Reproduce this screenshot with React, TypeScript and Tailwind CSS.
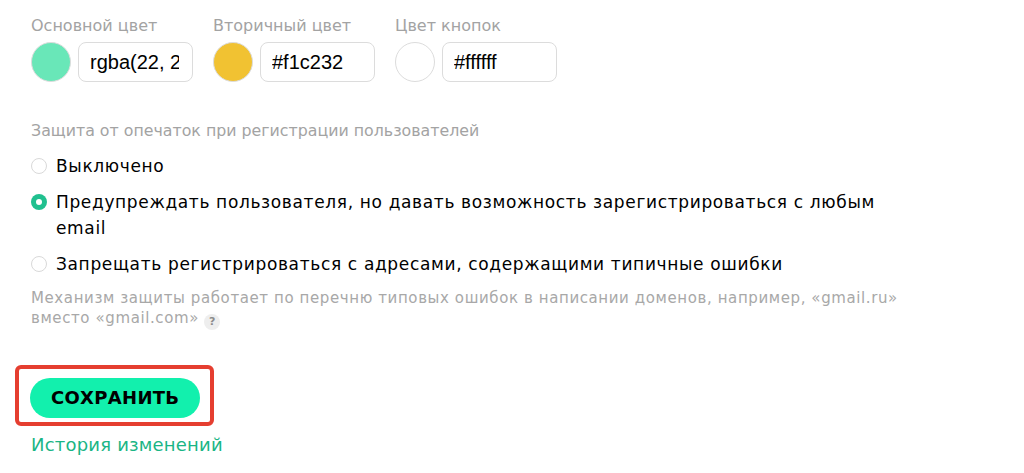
import { useState } from "react";

const MONT = "font-['DejaVu_Sans',sans-serif]";

function ColorField({
  label,
  swatch,
  value,
}: {
  label: string;
  swatch: string;
  value: string;
}) {
  return (
    <div className="flex w-[162px] flex-col gap-[7px]">
      <span className={`${MONT} text-[16px] leading-[19px] text-[#a3a3a3]`}>{label}</span>
      <div className="flex items-center gap-[7px]">
        <div
          className="h-10 w-10 shrink-0 rounded-full border border-[#dcdcdc]"
          style={{ backgroundColor: swatch }}
        />
        <input
          readOnly
          value={value}
          className="h-10 w-[115px] rounded-lg border border-[#dcdcdc] bg-white pl-[11px] pr-[13px] font-['Liberation_Sans',sans-serif] text-[20px] text-black outline-none"
        />
      </div>
    </div>
  );
}

const OPTIONS = [
  { id: "off", label: "Выключено" },
  {
    id: "warn",
    label:
      "Предупреждать пользователя, но давать возможность зарегистрироваться с любым email",
  },
  {
    id: "deny",
    label: "Запрещать регистрироваться с адресами, содержащими типичные ошибки",
  },
];

export default function App() {
  const [mode, setMode] = useState("warn");

  return (
    <div className="min-h-screen bg-white pl-[31px] pt-[16px]">
      <div className="flex gap-5">
        <ColorField label="Основной цвет" swatch="#69e7b8" value="rgba(22, 228, 167, 0.65)" />
        <ColorField label="Вторичный цвет" swatch="#f1c232" value="#f1c232" />
        <ColorField label="Цвет кнопок" swatch="#ffffff" value="#ffffff" />
      </div>

      <div className="mt-[39px] w-[880px]">
        <p className={`${MONT} text-[15.8px] leading-[20px] text-[#a3a3a3]`}>
          Защита от опечаток при регистрации пользователей
        </p>

        <div className="mt-[12px] flex flex-col gap-[10px]">
          {OPTIONS.map((o) => {
            const checked = mode === o.id;
            return (
              <label
                key={o.id}
                onClick={() => setMode(o.id)}
                className="flex cursor-pointer items-start gap-[9px]"
              >
                <span
                  className={
                    checked
                      ? "mt-[5px] flex h-4 w-4 shrink-0 items-center justify-center rounded-full bg-[#20c08f]"
                      : "mt-[5px] h-4 w-4 shrink-0 rounded-full border border-[#d9d9d9] bg-white"
                  }
                >
                  {checked && <span className="h-[6px] w-[6px] rounded-full bg-white" />}
                </span>
                <span className={`${MONT} text-[17px] leading-[26px] tracking-[0.65px] text-black`}>
                  {o.label}
                </span>
              </label>
            );
          })}
        </div>

        <p className={`${MONT} mt-[11px] text-[15px] leading-[20px] tracking-[0.6px] text-[#a8a8a8]`}>
          Механизм защиты работает по перечню типовых ошибок в написании доменов, например, «gmail.ru»
          вместо «gmail.com»{" "}
          <span className="inline-flex h-4 w-4 items-center justify-center rounded-full bg-[#eeeeee] align-[-2px] text-[11px] font-bold leading-none tracking-normal text-[#8c8c8c]">
            ?
          </span>
        </p>
      </div>

      <div className="mt-[35px] ml-[-16px] inline-flex rounded-md border-4 border-[#e53e30] pt-[9px] pb-[4px] pl-[11px] pr-[10px]">
        <button className={`${MONT} h-10 rounded-full bg-[#12f0ad] px-[21px] text-[18px] font-bold tracking-[0.3px] text-black`}>
          СОХРАНИТЬ
        </button>
      </div>

      <div className="mt-[7px]">
        <a className={`${MONT} cursor-pointer text-[18px] leading-[22px] tracking-[0.2px] text-[#1ab585]`}>
          История изменений
        </a>
      </div>
    </div>
  );
}
